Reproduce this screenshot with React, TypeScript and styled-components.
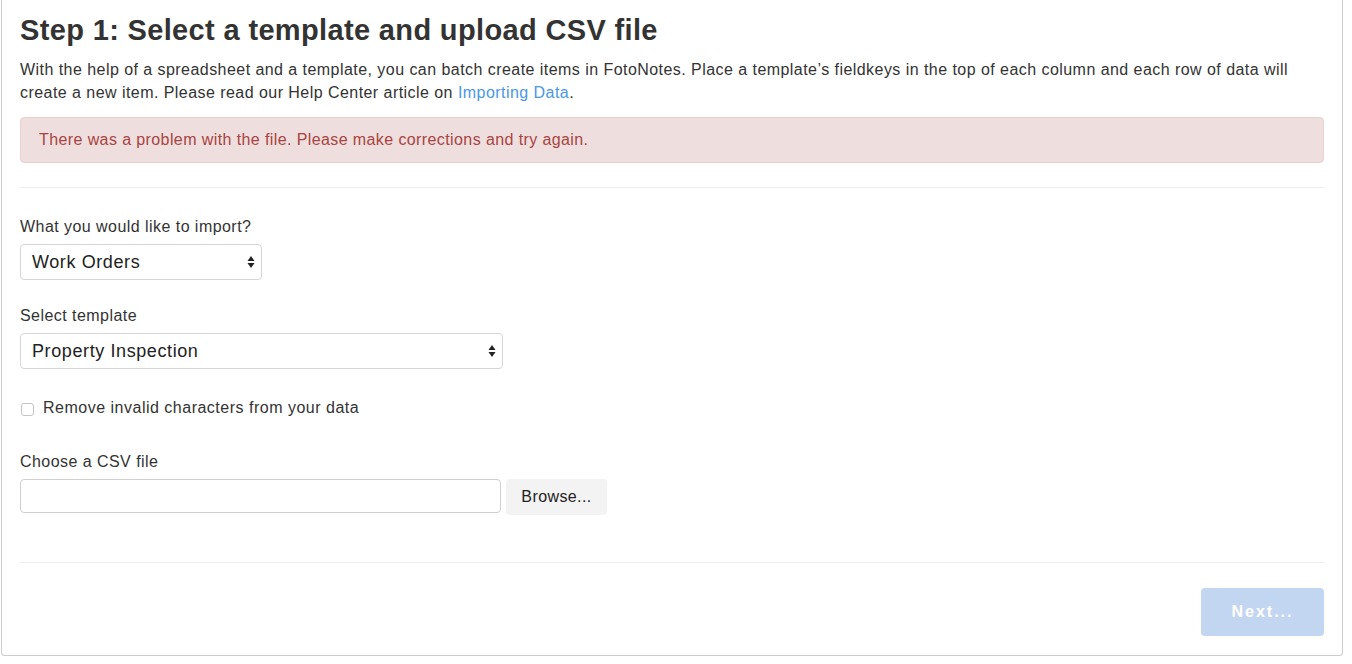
import * as React from 'react';
import styled, { createGlobalStyle } from 'styled-components';

const GlobalStyle = createGlobalStyle`
    html, body {
        margin: 0;
        padding: 0;
        background: #ffffff;
    }
    body {
        font-family: "Liberation Sans", Arial, Helvetica, sans-serif;
        color: #333333;
    }
`;

const Panel = styled.div`
    width: 1342px;
    height: 656px;
    margin-left: 1px;
    box-sizing: border-box;
    border: 1px solid #cccccc;
    border-top: none;
    border-radius: 0 0 4px 4px;
    padding: 0 18px 0 18px;
    display: flex;
    flex-direction: column;
`;

const Title = styled.h1`
    margin: 15px 0 0;
    font-size: 29px;
    line-height: 31px;
    letter-spacing: 0.35px;
    font-weight: bold;
    color: #333333;
`;

const Intro = styled.p`
    margin: 12px 0 0;
    font-size: 16px;
    line-height: 23px;
    letter-spacing: 0.45px;
    color: #333333;
`;

const Link = styled.a`
    color: #4a97e8;
    text-decoration: none;
`;

const Alert = styled.div`
    margin-top: 13px;
    height: 46px;
    box-sizing: border-box;
    padding: 0 18px;
    display: flex;
    align-items: center;
    background: #eedede;
    border: 1px solid #ead2d4;
    border-radius: 4px;
    color: #a94442;
    font-size: 16px;
    letter-spacing: 0.4px;
`;

const Divider = styled.hr<{ $top: number }>`
    margin: ${(p) => p.$top}px 0 0;
    border: none;
    border-top: 1px solid #eeeeee;
    height: 0;
`;

const Field = styled.div<{ $top: number }>`
    margin-top: ${(p) => p.$top}px;
    display: flex;
    flex-direction: column;
    align-items: flex-start;
`;

const Label = styled.label`
    font-size: 16px;
    line-height: 21px;
    letter-spacing: 0.45px;
    color: #333333;
`;

const Select = styled.div<{ $width: number }>`
    margin-top: 7px;
    width: ${(p) => p.$width}px;
    height: 36px;
    box-sizing: border-box;
    border: 1px solid #d6d6d6;
    border-radius: 4px;
    background: #ffffff;
    display: flex;
    align-items: center;
    justify-content: space-between;
    padding: 0 5px 0 11px;
    font-size: 18px;
    letter-spacing: 0.6px;
    color: #222222;
`;

const CheckRow = styled.div`
    margin-top: 28px;
    display: flex;
    align-items: center;
    gap: 9px;
    font-size: 16px;
    line-height: 21px;
    letter-spacing: 0.5px;
`;

const Box = styled.span`
    width: 13px;
    height: 13px;
    margin: 4px 0 0 1px;
    box-sizing: border-box;
    border: 1px solid #c4c4c4;
    border-radius: 3px;
    background: #ffffff;
`;

const FileRow = styled.div`
    margin-top: 7px;
    display: flex;
    gap: 5px;
`;

const FileInput = styled.div`
    width: 481px;
    height: 34px;
    box-sizing: border-box;
    border: 1px solid #cfcfcf;
    border-radius: 4px;
`;

const Browse = styled.div`
    width: 101px;
    height: 36px;
    display: flex;
    align-items: center;
    justify-content: center;
    background: #f3f3f3;
    border-radius: 4px;
    font-size: 16px;
    letter-spacing: 0.4px;
    color: #222222;
`;

const Footer = styled.div`
    margin-top: 25px;
    display: flex;
    justify-content: flex-end;
`;

const NextButton = styled.button`
    width: 123px;
    height: 48px;
    border: none;
    border-radius: 4px;
    background: #c2d6f2;
    color: #ffffff;
    font-family: "Liberation Sans", Arial, sans-serif;
    font-size: 16px;
    font-weight: bold;
    letter-spacing: 2px;
`;

const Arrows = () => (
    <svg width="10" height="14" viewBox="0 0 10 14">
        <path d="M5 1 L8.5 6 L1.5 6 Z" fill="#222" />
        <path d="M5 13 L8.5 8 L1.5 8 Z" fill="#222" />
    </svg>
);

export default function App() {
    return (
        <>
            <GlobalStyle />
            <Panel>
                <Title>Step 1: Select a template and upload CSV file</Title>
                <Intro>
                    With the help of a spreadsheet and a template, you can batch create items in
                    FotoNotes. Place a template’s fieldkeys in the top of each column and each row
                    of data will create a new item. Please read our Help Center article on{' '}
                    <Link href="#">Importing Data</Link>.
                </Intro>
                <Alert>There was a problem with the file. Please make corrections and try again.</Alert>
                <Divider $top={24} />

                <Field $top={28}>
                    <Label>What you would like to import?</Label>
                    <Select $width={242}>
                        <span>Work Orders</span>
                        <Arrows />
                    </Select>
                </Field>

                <Field $top={25}>
                    <Label>Select template</Label>
                    <Select $width={483}>
                        <span>Property Inspection</span>
                        <Arrows />
                    </Select>
                </Field>

                <CheckRow>
                    <Box />
                    <span>Remove invalid characters from your data</span>
                </CheckRow>

                <Field $top={33}>
                    <Label>Choose a CSV file</Label>
                    <FileRow>
                        <FileInput />
                        <Browse>Browse...</Browse>
                    </FileRow>
                </Field>

                <Divider $top={47} />
                <Footer>
                    <NextButton disabled>Next...</NextButton>
                </Footer>
            </Panel>
        </>
    );
}
